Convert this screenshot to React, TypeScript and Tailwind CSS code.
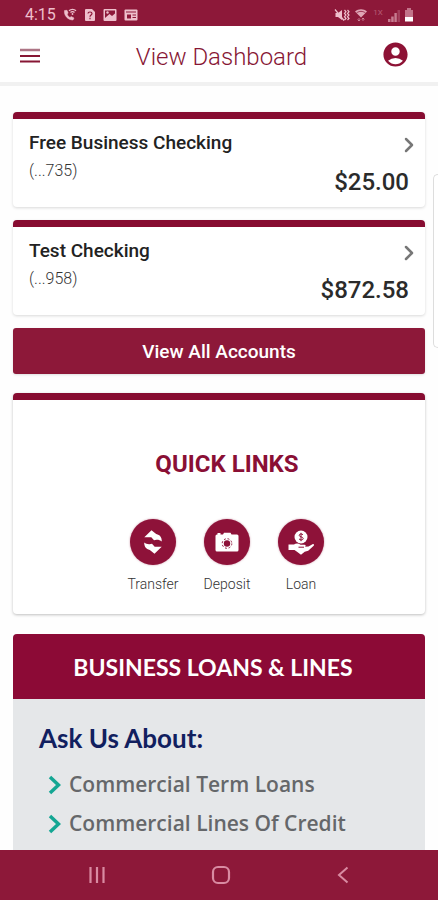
import React from 'react'
import { ChevronRight } from 'lucide-react'
import { MdAccountCircle } from 'react-icons/md'

const accounts = [
  { name: 'Free Business Checking', mask: '(...735)', balance: '$25.00' },
  { name: 'Test Checking', mask: '(...958)', balance: '$872.58' },
]

const loanTopics = ['Commercial Term Loans', 'Commercial Lines Of Credit']

const TransferIcon = () => (
  <svg width="46" height="46" viewBox="0 0 46 46" fill="#fff" aria-hidden="true">
    <path d="M14.300 18.300 21.500 11.300l4.700 3.800c3.800.8 5.600 3.200 5.600 7.400-1.600-1.300-3.300-1.800-5.300-1.700l-2.500.5-2.700-3z" />
    <path d="M31.700 27.700 24.500 34.700l-4.700-3.800c-3.800-.8-5.600-3.200-5.600-7.400 1.600 1.300 3.300 1.800 5.300 1.700l2.500-.5 2.700 3z" />
  </svg>
)

const DepositIcon = () => (
  <svg width="46" height="46" viewBox="0 0 46 46" fill="#fff" aria-hidden="true">
    <path d="M13.500 14h3v1.500h2.500l1-1.800h6.500l1 1.800H33a1.500 1.500 0 0 1 1.500 1.500v14a1.500 1.500 0 0 1-1.500 1.500H13a1.500 1.500 0 0 1-1.500-1.500V17a1.500 1.500 0 0 1 1.500-1.500h.5z" />
    <circle cx="23" cy="24.500" r="4.800" fill="none" stroke="#8e1239" strokeWidth="1" strokeDasharray="1.900 1.870" />
    <circle cx="23" cy="24.500" r="3.200" fill="#8e1239" />
  </svg>
)

const LoanIcon = () => (
  <svg width="46" height="46" viewBox="0 0 46 46" aria-hidden="true">
    <circle cx="23" cy="18" r="6.500" fill="#fff" />
    <path d="M25 15.800c-.8-1.200-3.800-1.200-3.800.5 0 2 4 1.200 4 3.200 0 1.800-3.200 1.800-4.200.4M23 13.800v8.400" fill="none" stroke="#8e1239" strokeWidth="1" />
    <path
      d="M10.500 25.500H16c2-1.500 4.500-1.300 6.500.2h4c1.500 0 1.500 1.800.3 2l3.700-.2 4-2.300c1.300-.5 2 .6 1.200 1.500l-5.500 5-3.500 1-3.700 3-4-3-2.500-1.700h-6z"
      fill="#fff"
    />
    <path d="M20.500 28.200h5.500" stroke="#8e1239" strokeWidth="1" />
  </svg>
)

const quickLinks = [
  { label: 'Transfer', Icon: TransferIcon },
  { label: 'Deposit', Icon: DepositIcon },
  { label: 'Loan', Icon: LoanIcon },
]

const StatusBar = () => (
  <div className="flex h-[26px] shrink-0 items-center justify-between bg-[#8d1839] pr-6 pl-[25px] text-[#eebfcc]">
    <div className="flex items-center gap-[7px] pt-1">
      <span className="text-base leading-5">4:15</span>
      {/* wifi call */}
      <svg width="14" height="14" viewBox="0 0 14 14" fill="none" stroke="currentColor" aria-hidden="true">
        <path d="M1.500 2.500c-.8 4.500 3 9.500 8.500 9.500l1-2-2.800-1.500-1.200 1C5.500 8.800 4.500 7.500 4.200 6l1-1L4 2.300z" fill="currentColor" strokeWidth=".5" />
        <path d="M6 2.800c2-2 5-2 7 0M7.500 4.500c1.200-1.200 3-1.200 4 0" strokeWidth="1.300" />
        <circle cx="9.500" cy="6" r=".9" fill="currentColor" stroke="none" />
      </svg>
      {/* unknown SIM */}
      <svg width="12" height="14" viewBox="0 0 12 14" aria-hidden="true">
        <path d="M2 1h6l3 3v8a1 1 0 0 1-1 1H2a1 1 0 0 1-1-1V2a1 1 0 0 1 1-1z" fill="currentColor" />
        <path d="M4 5.500C4 3.500 8 3.500 8 5.500 8 7 6 7 6 8.700M6 9.800v1.400" fill="none" stroke="#8d1839" strokeWidth="1.200" />
      </svg>
      {/* picture */}
      <svg width="14" height="14" viewBox="0 0 14 14" aria-hidden="true">
        <rect x=".5" y="1" width="13" height="12" rx="1" fill="currentColor" />
        <path d="M2 2.500h10v3L9 8 6.500 6 2 10z" fill="#8d1839" />
        <circle cx="4.500" cy="4.500" r="1.200" fill="currentColor" />
      </svg>
      {/* news card */}
      <svg width="14" height="14" viewBox="0 0 14 14" aria-hidden="true">
        <rect x=".5" y="1.500" width="13" height="11" rx="1" fill="currentColor" />
        <path d="M2 4h10M8.500 7H12M8.500 9.500H12" stroke="#8d1839" strokeWidth="1.200" />
        <rect x="3" y="6.500" width="4" height="4" fill="#8d1839" />
      </svg>
    </div>

    <div className="flex items-center gap-1 pt-1">
      {/* vibrate */}
      <svg width="16" height="14" viewBox="0 0 16 14" fill="none" stroke="currentColor" aria-hidden="true">
        <path d="M1.500 5h2.500L8 2v10L4 9H1.500z" fill="currentColor" stroke="none" />
        <path d="m1 1.500 9 11M10.500 2l1.500 1.700-1.500 1.700L12 7l-1.500 1.700 1.500 1.800-1.500 1.500M13.500 2 15 3.700l-1.500 1.700L15 7l-1.500 1.700 1.500 1.800-1.500 1.500" strokeWidth="1.200" />
      </svg>
      {/* wifi */}
      <svg width="14" height="14" viewBox="0 0 14 14" aria-hidden="true">
        <path d="M1 3.500c3.500-3 8.500-3 12 0L7 9.500z" fill="currentColor" opacity=".85" />
        <path d="M2.500 5c2.800-2.200 6.200-2.200 9 0" fill="none" stroke="#8d1839" strokeWidth=".8" />
        <path d="M5 13v-3M3.500 11.500 5 13l1.200-1.500M9 10v3M7.800 11.500 9 10l1.500 1.500" fill="none" stroke="currentColor" strokeWidth=".9" opacity=".6" />
      </svg>
      <span className="h-[14px] w-3 text-center text-[8px] leading-[9px] opacity-40">1X</span>
      {/* signal */}
      <svg width="12" height="13" viewBox="0 0 12 13" className="opacity-60" fill="currentColor" aria-hidden="true">
        <path d="M0 10h2.500v3H0zM3.200 7.500h2.500V13H3.200zM6.400 4h2.400v9H6.400z" />
        <path d="M9.500 1H12v12H9.500z" opacity=".4" />
      </svg>
      {/* battery */}
      <svg width="10" height="14" viewBox="0 0 10 14" fill="currentColor" aria-hidden="true">
        <path d="M3 0h4v2h2v7H1V2h2z" opacity=".55" />
        <path d="M1 9h8v4.500H1z" fill="#fff" />
      </svg>
    </div>
  </div>
)

const NavBar = () => (
  <nav className="flex h-[50px] shrink-0 items-center justify-between bg-[#8d1839] px-[85px] text-[#d98ba2]">
    <button type="button" aria-label="Recent apps" className="flex w-6 justify-center">
      <svg width="18" height="18" viewBox="0 0 18 18" stroke="currentColor" strokeWidth="2.200" aria-hidden="true">
        <path d="M2.500 1v16M9 1v16M15.500 1v16" />
      </svg>
    </button>
    <button type="button" aria-label="Home" className="flex w-6 justify-center">
      <svg width="20" height="20" viewBox="0 0 20 20" fill="none" stroke="currentColor" strokeWidth="2.200" aria-hidden="true">
        <rect x="2" y="2" width="16" height="16" rx="5" />
      </svg>
    </button>
    <button type="button" aria-label="Back" className="flex w-5 justify-center">
      <svg width="12" height="18" viewBox="0 0 12 18" fill="none" stroke="currentColor" strokeWidth="2" aria-hidden="true">
        <path d="M10.500 1.500 2 9l8.500 7.500" />
      </svg>
    </button>
  </nav>
)

export default function App() {
  return (
    <div className="relative flex h-screen flex-col overflow-hidden bg-[#fefefe] font-[Roboto,sans-serif]">
      <StatusBar />

      <header className="flex h-[60px] shrink-0 items-center justify-between border-b-4 border-[#f1f1f1] bg-white pr-7 pl-5 text-[#871634]">
        <button type="button" aria-label="Menu" className="flex w-7 pt-1">
          <svg width="20" height="16" viewBox="0 0 20 16" aria-hidden="true">
            <path d="M0 2h20" stroke="#ad7585" strokeWidth="2.500" />
            <path d="M0 8h20M0 13.500h20" stroke="currentColor" strokeWidth="2.200" />
          </svg>
        </button>
        <h1 className="pt-[6px] pl-[14px] text-2xl font-light">View Dashboard</h1>
        <button type="button" aria-label="Profile" className="text-[#8d1235]">
          <MdAccountCircle size={29} />
        </button>
      </header>

      <main className="flex min-h-0 flex-1 flex-col overflow-y-auto px-[13px] pt-[26px] [scrollbar-width:none]">
        <div className="flex flex-col gap-[13px]">
          {accounts.map(({ name, mask, balance }) => (
            <a
              key={name}
              href="#account"
              className="block h-[95px] shrink-0 rounded-[4px] border-t-[7px] border-[#870c31] bg-white px-4 shadow-[0_1px_3px_rgba(0,0,0,0.15)]"
            >
              <div className="flex items-start justify-between pt-3">
                <div>
                  <h2 className="text-[19px] leading-6 font-medium text-[#222]">{name}</h2>
                  <p className="mt-1 text-base leading-6 font-light text-[#333]">{mask}</p>
                </div>
                <ChevronRight size={24} strokeWidth={2.500} className="mt-[2px] -mr-3 text-[#777]" aria-hidden="true" />
              </div>
              <p className="-mt-[17px] text-right text-2xl leading-8 font-medium text-[#2b2b2b]">{balance}</p>
            </a>
          ))}
        </div>

        <button
          type="button"
          className="mt-[13px] h-[46px] shrink-0 rounded-[3px] bg-[#8d1839] pt-[2px] text-[19px] font-medium text-white shadow-sm"
        >
          View All Accounts
        </button>

        <section className="mt-[19px] shrink-0 rounded-[4px] border-t-[7px] border-[#870c31] bg-white pb-5 pl-4 shadow-[0_1px_3px_rgba(0,0,0,0.25)]">
          <h2 className="pt-12 text-center text-2xl leading-8 font-bold text-[#8a0f35]">QUICK LINKS</h2>
          <div className="mt-[39px] flex justify-center">
            {quickLinks.map(({ label, Icon }) => (
              <a key={label} href="#link" className="flex w-[74px] flex-col items-center">
                <span className="rounded-full bg-[#8e1239] shadow-[0_0_2px_rgba(142,18,57,0.5)]">
                  <Icon />
                </span>
                <span className="mt-[9px] text-sm leading-5 font-light text-[#333]">{label}</span>
              </a>
            ))}
          </div>
        </section>

        <section className="mt-5 shrink-0 rounded-[4px] bg-[#e5e7e9] pb-6">
          <h2 className="flex h-[65px] items-center justify-center rounded-t-[4px] bg-[#8c0a36] pt-[2px] pr-3 font-[Lato,sans-serif] text-[23px] font-bold text-white">
            BUSINESS LOANS &amp; LINES
          </h2>
          <h3 className="mt-[23px] pl-[26px] font-[Lato,sans-serif] text-[26px] leading-8 font-bold text-[#11205f]">
            Ask Us About:
          </h3>
          <ul className="mt-[11px] pl-[35px] font-['Open_Sans',sans-serif]">
            {loanTopics.map((topic) => (
              <li key={topic} className="flex h-[39px] items-center gap-2">
                <svg width="13" height="20" viewBox="0 0 13 20" fill="none" stroke="#14a693" strokeWidth="3.500" aria-hidden="true">
                  <path d="m2 2 8.500 8L2 18" />
                </svg>
                <span className="text-[21px] font-semibold text-[#65676a]">{topic}</span>
              </li>
            ))}
          </ul>
        </section>
      </main>

      <NavBar />

      {/* edge panel handle */}
      <div className="absolute top-[174px] right-0 h-[174px] w-[5px] rounded-l-[5px] border border-r-0 border-[#ddd] bg-white" />
    </div>
  )
}
